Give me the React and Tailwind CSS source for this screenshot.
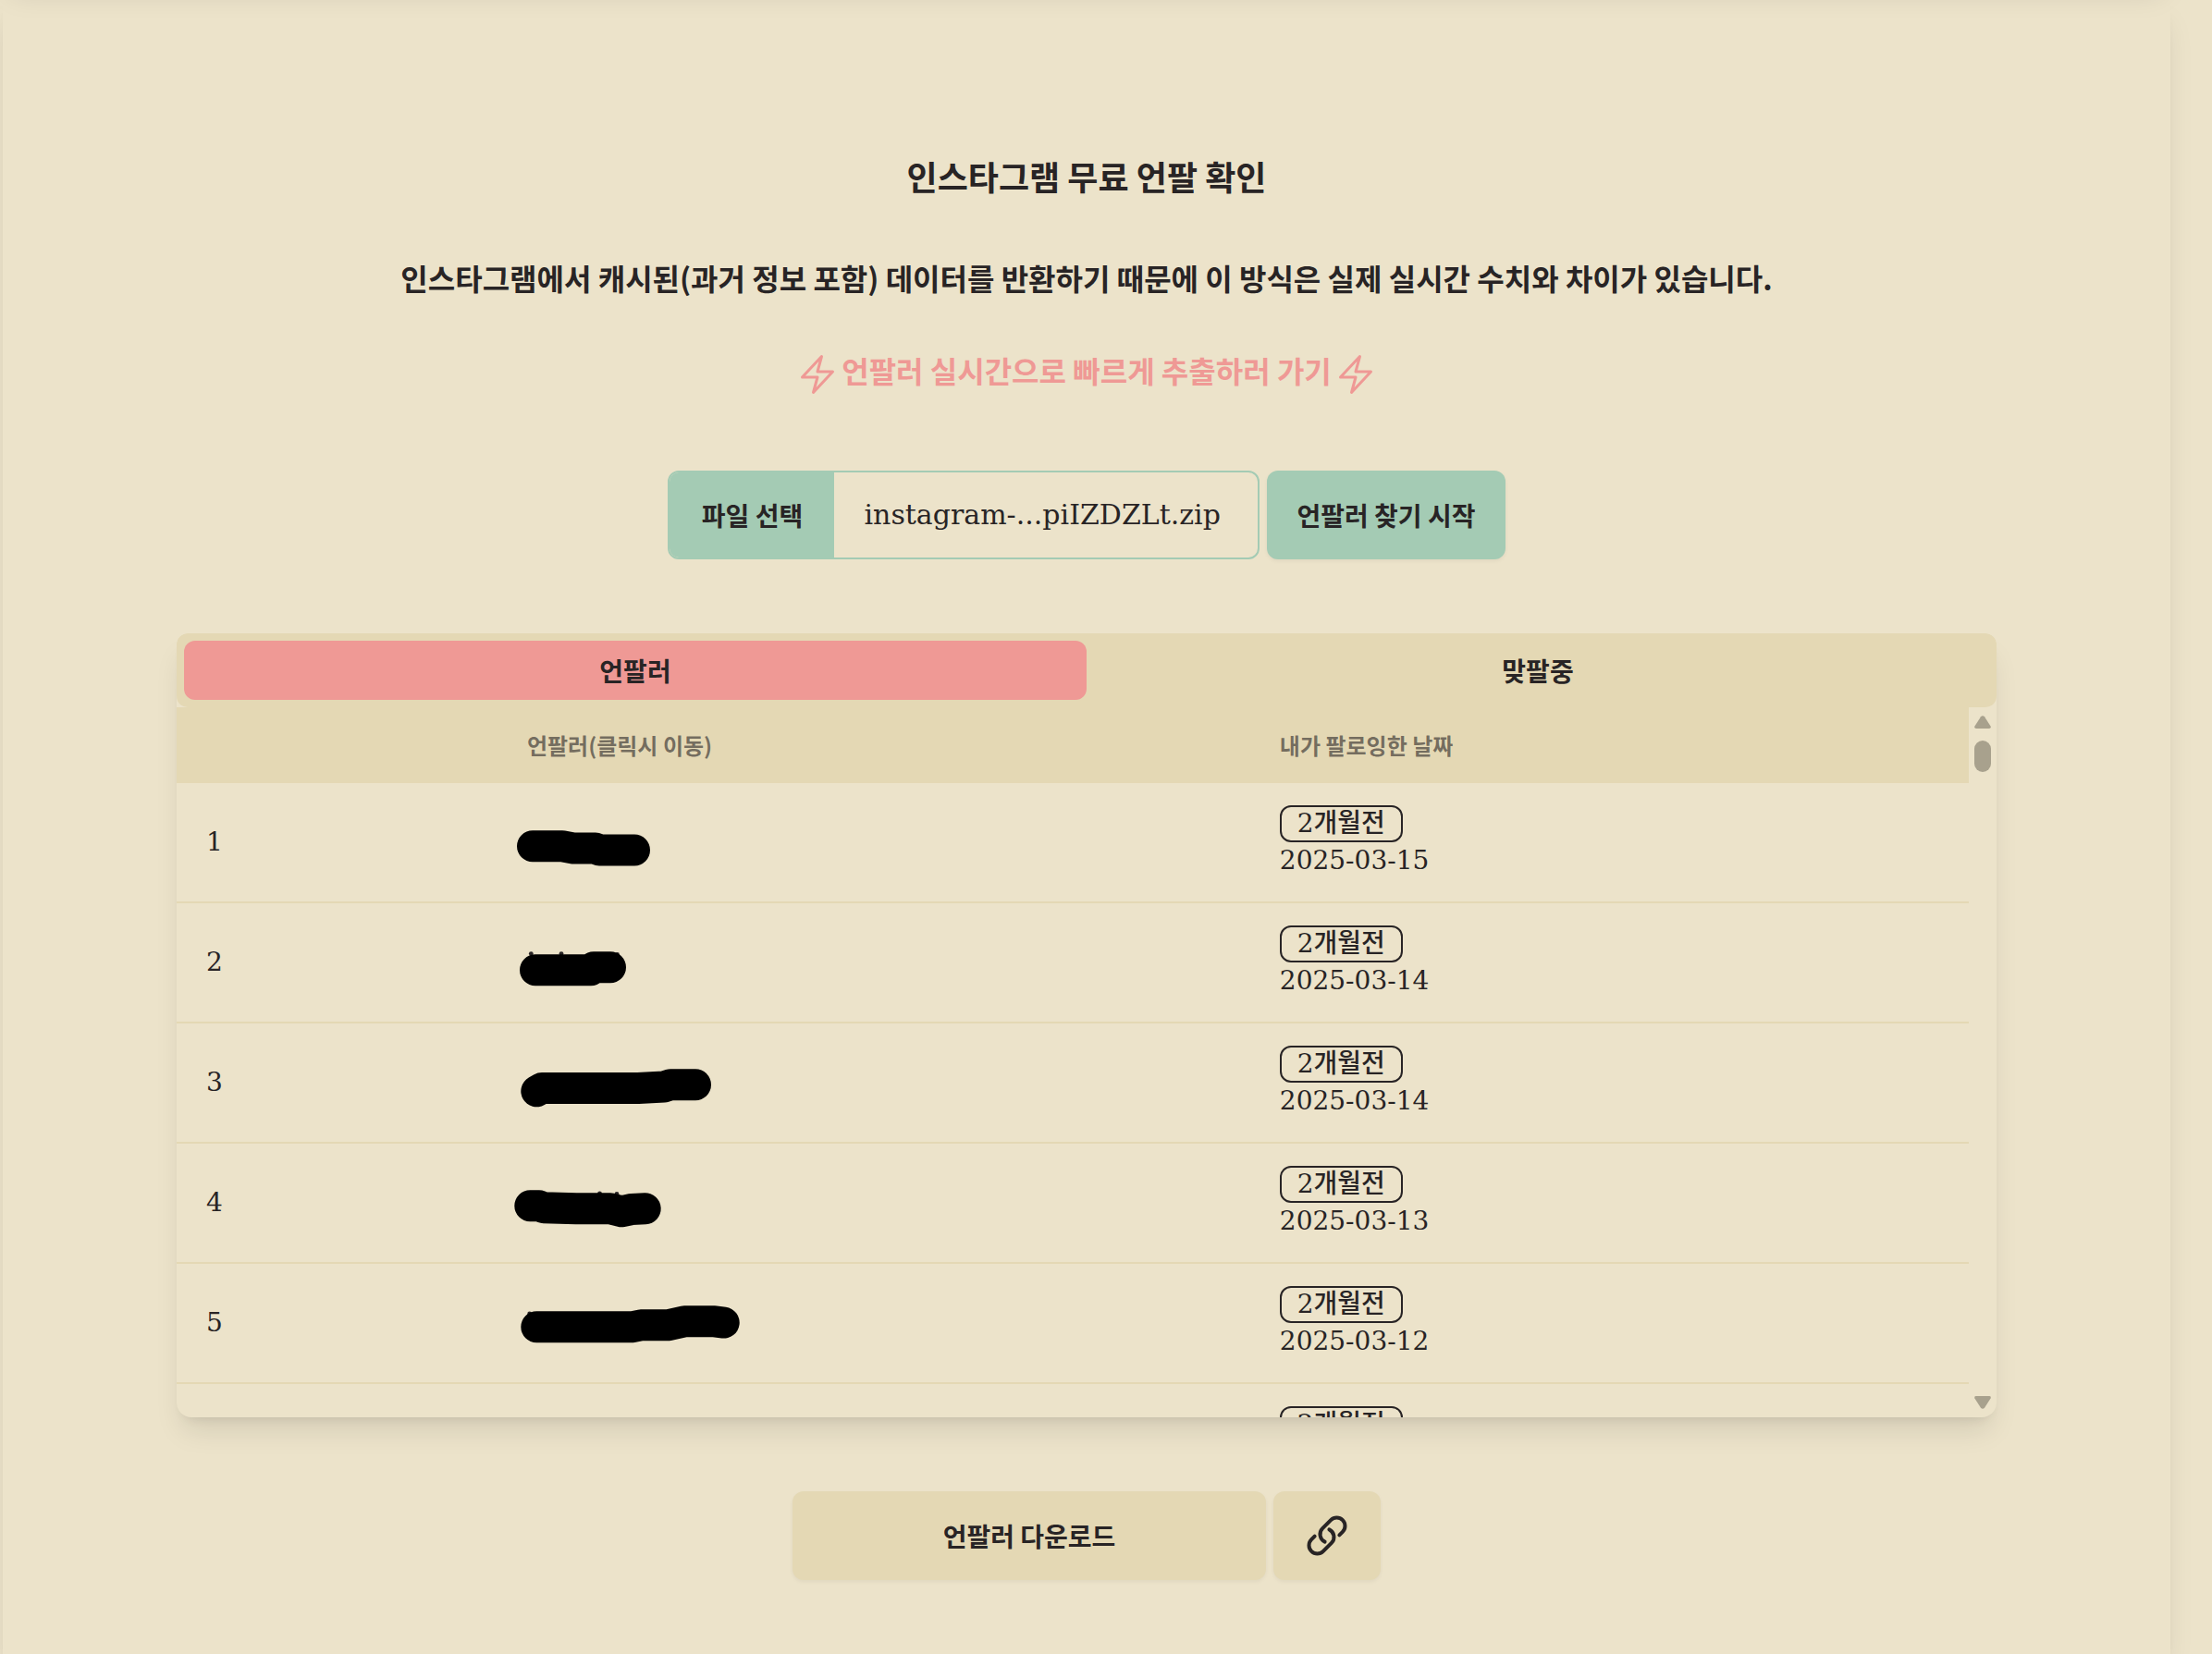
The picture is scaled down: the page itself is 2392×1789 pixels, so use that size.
import React, { useState } from 'react';

const rows = [
  {
    id: 1,
    date: '2025-03-15',
    mark: 'M22 44.3 54 44.3 66 46.5 90 46.5 94 48.5 132 48.5',
    dots: []
  },
  {
    id: 2,
    date: '2025-03-14',
    mark: 'M25 48.3 85 48.3 88 45.3 106 45.3',
    dots: [[20.3, 30.6], [53, 30.6], [113.5, 31.5]]
  },
  {
    id: 3,
    date: '2025-03-14',
    mark: 'M26.3 49.3 32 46 136 46 164 44.5 171 42.3 198 42.3',
    dots: []
  },
  {
    id: 4,
    date: '2025-03-13',
    mark: 'M19.3 43.3 29 43.3 34 45.3 69 46.3 106 46.3 118 49.3 129 47 143.7 46.3',
    dots: [[94.5, 30], [113, 30.4]]
  },
  {
    id: 5,
    date: '2025-03-12',
    mark: 'M26.3 44.3 129 44.3 139 42.3 168 42.3 186 38.3 219 38.3 228.7 39.6',
    dots: [[18.7, 30]]
  },
  {
    id: 6,
    date: '2025-03-12',
    mark: 'M24 45 150 45',
    dots: []
  }
];

const BoltIcon = () => (
  <svg className="size-12 shrink-0" viewBox="0 0 24 24" fill="none" stroke="currentColor" strokeWidth="1.5" strokeLinecap="round" strokeLinejoin="round" aria-hidden="true">
    <path d="m3.75 13.5 10.5-11.25L12 10.5h8.25L9.75 21.75 12 13.5H3.75z" />
  </svg>
);

const LinkIcon = () => (
  <svg className="size-12" viewBox="0 0 24 24" fill="none" stroke="currentColor" strokeWidth="2" strokeLinecap="round" strokeLinejoin="round" aria-hidden="true">
    <path d="M13.19 8.688a4.5 4.5 0 0 1 1.242 7.244l-4.5 4.5a4.5 4.5 0 0 1-6.364-6.364l1.757-1.757m13.35-.622 1.757-1.757a4.5 4.5 0 0 0-6.364-6.364l-4.5 4.5a4.5 4.5 0 0 0 1.242 7.244" />
  </svg>
);

// user names are blacked out with a thick marker line
const HiddenName = ({ mark, dots }) => (
  <svg className="h-20 w-[280px]" viewBox="0 0 280 80" aria-hidden="true">
    {dots.map(([x, y]) => (
      <circle key={x} cx={x} cy={y} r="2.4" fill="#282425" />
    ))}
    <path d={mark} fill="none" stroke="#000" strokeWidth="34" strokeLinecap="round" strokeLinejoin="round" />
  </svg>
);

const ScrollBar = () => (
  <div className="flex w-[30px] shrink-0 flex-col items-center justify-between py-[9px] text-[#a8a18d]" aria-hidden="true">
    <div className="flex flex-col items-center gap-3">
      <svg className="h-[15px] w-[18px]" viewBox="0 0 18 15" fill="currentColor">
        <path d="M7 1.2Q9-.8 11 1.2L17.6 11.4Q18.4 14 16 14H2Q-.4 14 .4 11.4Z" />
      </svg>
      <div className="h-[34px] w-[18px] rounded-full bg-[#a8a18d]" />
    </div>
    <svg className="h-[15px] w-[18px]" viewBox="0 0 18 15" fill="currentColor">
      <path d="M7 13.8Q9 15.8 11 13.8L17.6 3.6Q18.4 1 16 1H2Q-.4 1 .4 3.6Z" />
    </svg>
  </div>
);

function App() {
  const [tab, setTab] = useState('unfollowers');
  const [fileName, setFileName] = useState('instagram-...piIZDZLt.zip');

  const handleFile = (e) => {
    if (e.target.files.length > 0) {
      setFileName(e.target.files[0].name);
    }
  };

  const tabClass = (name) =>
    `h-16 flex-1 rounded-xl text-[28px] leading-8 font-bold ${tab === name ? 'bg-[#ef9995]' : ''}`;

  return (
    <div className="min-h-screen overflow-hidden bg-[#ece3ca] pl-[3px] pr-[45px] text-[#282425] font-['DejaVu_Serif','Noto_Sans_CJK_KR',serif]">
      <main className="relative flex min-h-screen flex-col items-center bg-[#ece3ca] px-47 pt-43 pb-20 shadow-[0_20px_30px_-6px_rgba(0,0,0,0.1),0_8px_12px_-8px_rgba(0,0,0,0.1)]">
        <div className="absolute inset-x-0 -top-15 h-10 rounded-2xl shadow-[0_20px_30px_-6px_rgba(0,0,0,0.1)]" />

        <h1 className="font-['Noto_Sans_CJK_KR',sans-serif] text-4xl leading-9 font-bold">인스타그램 무료 언팔 확인</h1>
        <p className="mt-18 text-center font-['Noto_Sans_CJK_KR',sans-serif] text-[32px] leading-10 font-bold">
          인스타그램에서 캐시된(과거 정보 포함) 데이터를 반환하기 때문에 이 방식은 실제 실시간 수치와 차이가 있습니다.
        </p>
        <a href="#realtime" className="mt-[61px] flex items-center gap-0.5 font-['Noto_Sans_CJK_KR',sans-serif] text-[32px] leading-9 font-bold text-[#ef9995]">
          <BoltIcon />
          <span className="pb-2.5">언팔러 실시간으로 빠르게 추출하러 가기</span>
          <BoltIcon />
        </a>

        <div className="mt-20 flex gap-2">
          <label className="flex h-24 w-[640px] cursor-pointer items-center overflow-hidden rounded-xl border-2 border-[#a4cbb4]">
            <input type="file" accept=".zip" className="sr-only" onChange={handleFile} />
            <span className="flex h-full w-[178px] shrink-0 items-center justify-center bg-[#a4cbb4] font-['Noto_Sans_CJK_KR',sans-serif] text-[28px] font-bold">
              파일 선택
            </span>
            <span className="truncate pl-8 text-[30px] leading-10">{fileName}</span>
          </label>
          <button
            type="button"
            className="h-24 rounded-xl bg-[#a4cbb4] px-8 font-['Noto_Sans_CJK_KR',sans-serif] text-[28px] font-bold shadow-[0_2px_4px_rgba(0,0,0,0.05)]"
          >
            언팔러 찾기 시작
          </button>
        </div>

        <section className="mt-20 w-full overflow-hidden rounded-t-xl rounded-b-2xl bg-[#ece3ca] shadow-[0_20px_30px_-6px_rgba(0,0,0,0.1),0_8px_12px_-8px_rgba(0,0,0,0.1)]">
          <div role="tablist" className="flex rounded-xl bg-[#e4d8b4] p-2 font-['Noto_Sans_CJK_KR',sans-serif]">
            <button type="button" role="tab" aria-selected={tab === 'unfollowers'} className={tabClass('unfollowers')} onClick={() => setTab('unfollowers')}>
              언팔러
            </button>
            <button type="button" role="tab" aria-selected={tab === 'mutual'} className={tabClass('mutual')} onClick={() => setTab('mutual')}>
              맞팔중
            </button>
          </div>

          <div className="flex h-192 overflow-hidden">
            <div className="flex-1 overflow-hidden">
              <table className="w-full table-fixed border-collapse text-left">
                <colgroup>
                  <col className="w-[17.9%]" />
                  <col className="w-[42%]" />
                  <col />
                </colgroup>
                <thead className="bg-[#e4d8b4] font-['Noto_Sans_CJK_KR',sans-serif] text-2xl text-[#282425]/60">
                  <tr className="h-[82px]">
                    <th className="px-8" />
                    <th className="px-8 font-bold">언팔러(클릭시 이동)</th>
                    <th className="px-8 font-bold">내가 팔로잉한 날짜</th>
                  </tr>
                </thead>
                <tbody>
                  {rows.map((row) => (
                    <tr key={row.id} className="border-b-2 border-[#e4d8b4] text-[28px] leading-10">
                      <td className="px-8 py-6">{row.id}</td>
                      <td className="px-4 py-6">
                        <a href={`#user-${row.id}`} aria-label={`언팔러 ${row.id}`} className="block w-[280px]">
                          <HiddenName mark={row.mark} dots={row.dots} />
                        </a>
                      </td>
                      <td className="px-8 py-6">
                        <div className="flex h-10 w-[133px] items-center justify-center rounded-xl border-2 border-[#282425] font-medium">
                          2개월전
                        </div>
                        <div>{row.date}</div>
                      </td>
                    </tr>
                  ))}
                </tbody>
              </table>
            </div>
            <ScrollBar />
          </div>
        </section>

        <div className="mt-20 flex gap-2">
          <button
            type="button"
            className="h-24 w-[512px] rounded-xl bg-[#e4d8b4] font-['Noto_Sans_CJK_KR',sans-serif] text-[28px] font-bold shadow-[0_2px_4px_rgba(0,0,0,0.05)]"
          >
            언팔러 다운로드
          </button>
          <button type="button" aria-label="링크 복사" className="h-24 rounded-xl bg-[#e4d8b4] px-[34px] shadow-[0_2px_4px_rgba(0,0,0,0.05)]">
            <LinkIcon />
          </button>
        </div>
      </main>
    </div>
  );
}

export default App;
